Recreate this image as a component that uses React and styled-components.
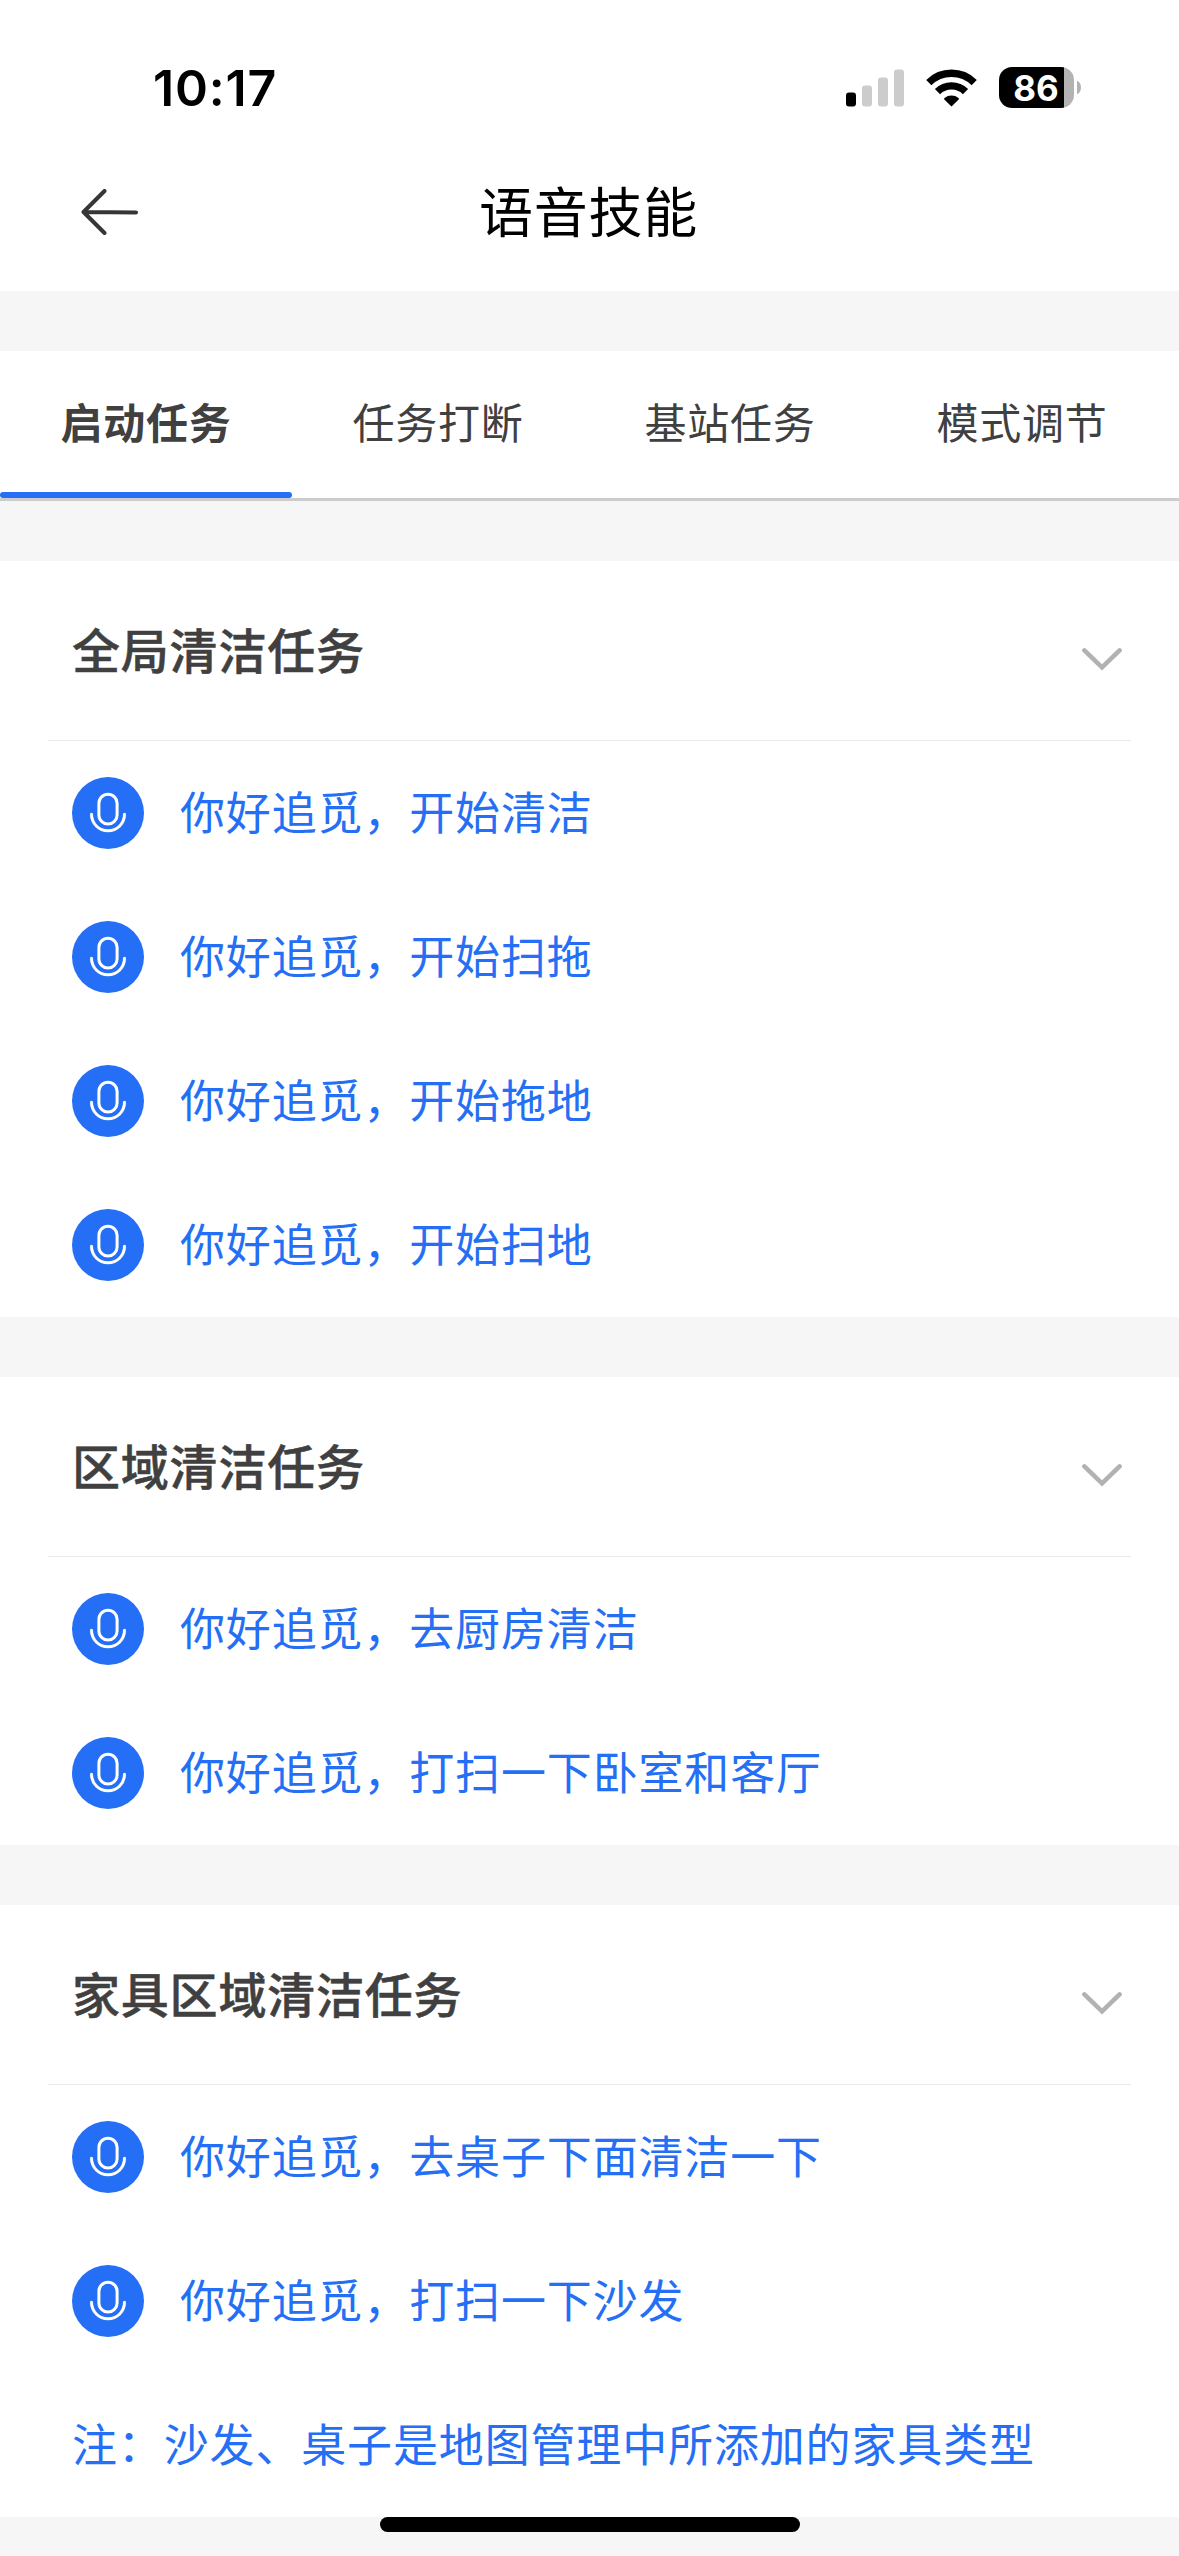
import React from "react";
import styled, { createGlobalStyle } from "styled-components";

const GlobalStyle = createGlobalStyle`
  * {
    box-sizing: border-box;
    margin: 0;
    padding: 0;
  }

  body {
    background: #f6f6f6;
    font-family: "Noto Sans CJK SC", sans-serif;
  }
`;

const Page = styled.div`
  position: relative;
  width: 1179px;
  height: 2556px;
  overflow: hidden;
  display: flex;
  flex-direction: column;
  gap: 60px;
`;

const Top = styled.header`
  height: 291px;
  flex-shrink: 0;
  background: #fff;
`;

const StatusBar = styled.div`
  height: 141px;
  display: flex;
  justify-content: space-between;
  align-items: center;
  padding: 34px 98px 0 153px;
`;

const Time = styled.span`
  font-family: Inter, sans-serif;
  font-size: 50px;
  line-height: 60px;
  font-weight: 600;
  letter-spacing: 0.8px;
  color: #000;
`;

const StatusIcons = styled.div`
  display: flex;
  align-items: center;
`;

const Signal = styled.svg`
  width: 58px;
  height: 42px;
  margin-right: 22px;
`;

const Wifi = styled.svg`
  width: 51px;
  height: 42px;
  margin-right: 22px;
`;

const Battery = styled.div`
  display: flex;
  align-items: center;
  gap: 3px;
`;

const BatteryBody = styled.div`
  width: 75px;
  height: 41px;
  padding-right: 1px;
  border-radius: 13px;
  background: linear-gradient(to right, #000 65px, #b3b3b3 65px);
  color: #fff;
  font-family: Inter, sans-serif;
  font-size: 35px;
  font-weight: 700;
  line-height: 42px;
  text-align: center;
`;

const BatteryCap = styled.div`
  width: 4px;
  height: 13px;
  border-radius: 0 4px 4px 0 / 0 6.5px 6.5px 0;
  background: #b3b3b3;
`;

const NavBar = styled.div`
  height: 150px;
  display: grid;
  grid-template-columns: 1fr auto 1fr;
  align-items: center;
  padding: 0 82px 8px 80px;
`;

const BackIcon = styled.svg`
  width: 58px;
  height: 46px;
`;

const Title = styled.h1`
  padding-bottom: 5px;
  font-size: 54px;
  font-weight: 400;
  line-height: 76px;
  letter-spacing: 0.8px;
  color: #000;
`;

const Tabs = styled.nav`
  height: 150px;
  flex-shrink: 0;
  display: flex;
  background: #fff;
  border-bottom: 3px solid #ccc;
`;

const Tab = styled.div`
  width: 292px;
  display: flex;
  flex-direction: column;
  justify-content: space-between;
  padding-top: 40px;
  text-align: center;
  font-size: 42px;
  line-height: 60px;
  letter-spacing: 0.8px;
  font-weight: ${({ $active }) => ($active ? 700 : 400)};
  color: #404040;
`;

const TabLine = styled.div`
  height: 6px;
  border-radius: 3px;
  background: ${({ $active }) => ($active ? "#246ff5" : "transparent")};
`;

const Section = styled.section`
  flex-shrink: 0;
  background: #fff;
`;

const SectionHeader = styled.div`
  height: 180px;
  margin: 0 48px;
  padding: 0 9px 0 24px;
  display: flex;
  justify-content: space-between;
  align-items: center;
  border-bottom: 1px solid #ebebeb;
`;

const SectionTitle = styled.h2`
  padding-bottom: 6px;
  font-size: 48px;
  font-weight: 500;
  line-height: 68px;
  letter-spacing: 0.8px;
  -webkit-text-stroke: 0.5px #404040;
  color: #404040;
`;

const Chevron = styled.svg`
  width: 40px;
  height: 24px;
  margin-top: 16px;
`;

const Row = styled.div`
  height: 144px;
  padding: 0 72px;
  display: flex;
  align-items: center;
  gap: 36px;
  color: #246ff5;
`;

const RowText = styled.p`
  padding-bottom: 4px;
  font-size: 45px;
  line-height: 64px;
  letter-spacing: 0.85px;
`;

const MicIcon = styled.svg`
  width: 72px;
  height: 72px;
  flex-shrink: 0;
`;

const HomeIndicator = styled.div`
  position: absolute;
  left: 380px;
  bottom: 24px;
  width: 420px;
  height: 15px;
  border-radius: 8px;
  background: #000;
`;

const tabs = ["启动任务", "任务打断", "基站任务", "模式调节"];

const sections = [
  {
    title: "全局清洁任务",
    items: [
      "你好追觅，开始清洁",
      "你好追觅，开始扫拖",
      "你好追觅，开始拖地",
      "你好追觅，开始扫地",
    ],
  },
  {
    title: "区域清洁任务",
    items: ["你好追觅，去厨房清洁", "你好追觅，打扫一下卧室和客厅"],
  },
  {
    title: "家具区域清洁任务",
    items: ["你好追觅，去桌子下面清洁一下", "你好追觅，打扫一下沙发"],
    note: "注：沙发、桌子是地图管理中所添加的家具类型",
  },
];

const Mic = () => (
  <MicIcon viewBox="0 0 72 72" fill="none">
    <circle cx="36" cy="36" r="36" fill="#246ff5" />
    <g stroke="#fff" strokeWidth="3" strokeLinecap="round">
      <rect x="26.9" y="17.2" width="18.2" height="29.8" rx="9.1" />
      <path d="M19.5 37.3a16.5 16.5 0 0 0 33 0" />
    </g>
  </MicIcon>
);

const Status = () => (
  <StatusBar>
    <Time>10:17</Time>
    <StatusIcons>
      <Signal viewBox="0 0 58 42">
        <rect x="0" y="25.5" width="10" height="14" rx="3" fill="#000" />
        <rect x="16" y="18.5" width="10" height="21" rx="3" fill="#ccc" />
        <rect x="32" y="10.5" width="10" height="29" rx="3" fill="#ccc" />
        <rect x="48" y="2.5" width="10" height="37" rx="3" fill="#ccc" />
      </Signal>
      <Wifi viewBox="0 0 51 42" fill="none" stroke="#000" strokeWidth="7.4">
        <path d="M2.8 15.6a32.4 32.4 0 0 1 45.4 0" />
        <path d="M11.5 24.6a20 20 0 0 1 28 0" />
        <path
          d="M25.5 39.5l7.2-7.1q.6-.8-.2-1.4a11.2 11.2 0 0 0-14 0q-.8.6-.2 1.4z"
          fill="#000"
          stroke="none"
        />
      </Wifi>
      <Battery>
        <BatteryBody>86</BatteryBody>
        <BatteryCap />
      </Battery>
    </StatusIcons>
  </StatusBar>
);

const App = () => {
  return (
    <>
      <GlobalStyle />
      <Page>
        <Top>
          <Status />
          <NavBar>
            <BackIcon
              viewBox="0 0 58 46"
              fill="none"
              stroke="#363636"
              strokeWidth="4"
              strokeLinecap="round"
              strokeLinejoin="round"
            >
              <path d="M24.5 2L3.5 23l21 21M3.5 23l52.5 .4" />
            </BackIcon>
            <Title>语音技能</Title>
          </NavBar>
        </Top>
        <Tabs>
          {tabs.map((tab, index) => (
            <Tab key={tab} $active={index === 0}>
              {tab}
              <TabLine $active={index === 0} />
            </Tab>
          ))}
        </Tabs>
        {sections.map((section) => (
          <Section key={section.title}>
            <SectionHeader>
              <SectionTitle>{section.title}</SectionTitle>
              <Chevron
                viewBox="0 0 40 24"
                fill="none"
                stroke="#b2b2b2"
                strokeWidth="4.6"
                strokeLinecap="round"
              >
                <path d="M2.4 3.4L20 20.4 37.6 3.4" />
              </Chevron>
            </SectionHeader>
            {section.items.map((item) => (
              <Row key={item}>
                <Mic />
                <RowText>{item}</RowText>
              </Row>
            ))}
            {section.note && (
              <Row>
                <RowText>{section.note}</RowText>
              </Row>
            )}
          </Section>
        ))}
        <HomeIndicator />
      </Page>
    </>
  );
};

export default App;
